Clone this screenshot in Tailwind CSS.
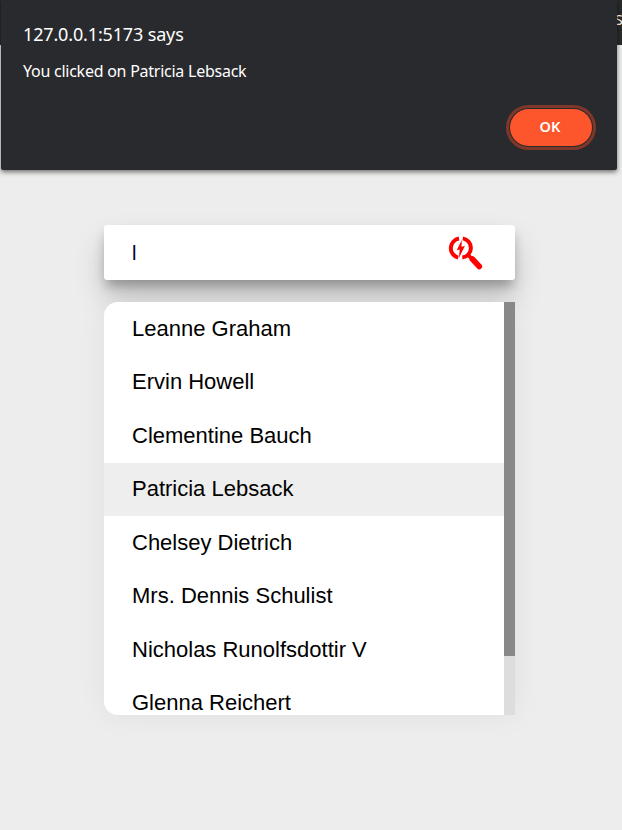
<!DOCTYPE html>
<html lang="en">
<head>
<meta charset="utf-8">
<title>User search</title>
<script src="https://cdn.jsdelivr.net/npm/@tailwindcss/browser@4"></script>
</head>
<body class="relative h-[830px] w-[622px] overflow-hidden bg-[#ededed] font-['Liberation_Sans',Arial,sans-serif] text-black">
  <header class="flex h-[45px] justify-end bg-[#292a2a] pt-[10px] font-['Noto_Sans',sans-serif] text-[14px] leading-5 text-white">
    <span class="w-[7px] overflow-hidden whitespace-nowrap">S</span>
  </header>

  <main class="ml-[104px] mt-[180px] flex w-[411px] flex-col gap-[22px]">
    <div class="flex h-[55px] items-center justify-between rounded-[3px] bg-white pl-[28px] pr-[32px] shadow-[0_17px_30px_rgba(0,0,0,0.18),0_8px_12px_-2px_rgba(0,0,0,0.28)]">
      <span class="text-[20px] leading-6 text-[#000033]">l</span>
      <svg class="-ml-px h-[34px] w-[35px]" viewBox="0 0 35 34" fill="none">
        <path d="M11 2.6A9.7 9.7 0 0 0 10.2 21.6M14.8 2.4A9.7 9.7 0 0 1 14.3 21.6" stroke="#f00" stroke-width="4"/>
        <path d="M13.8 4 8.7 14.3l3-.7-.8 8.4 6-12.1-3.4.8z" fill="#f00"/>
        <path d="m19 18 5 4.8" stroke="#f00" stroke-width="3.6"/>
        <path d="m24.3 23 7 7.5" stroke="#f00" stroke-width="5.6" stroke-linecap="round"/>
      </svg>
    </div>

    <div class="flex h-[413px] overflow-hidden rounded-l-[14px] bg-white shadow-[0_0_30px_rgba(0,0,0,0.06)]">
      <ul class="min-w-0 flex-1 text-[22px] leading-[53px]">
        <li class="h-[53px] pl-[28px]">Leanne Graham</li>
        <li class="h-[54px] pl-[28px]">Ervin Howell</li>
        <li class="h-[54px] pl-[28px]">Clementine Bauch</li>
        <li class="h-[53px] bg-[#eeeeee] pl-[28px] leading-[51px]">Patricia Lebsack</li>
        <li class="h-[53px] pl-[28px]">Chelsey Dietrich</li>
        <li class="h-[54px] pl-[28px]">Mrs. Dennis Schulist</li>
        <li class="h-[53px] pl-[28px]">Nicholas Runolfsdottir V</li>
        <li class="h-[54px] pl-[28px]">Glenna Reichert</li>
      </ul>
      <div class="w-[11px] bg-[#dddddd]">
        <div class="h-[354px] bg-[#888888]"></div>
      </div>
    </div>
  </main>

  <div role="alertdialog" class="absolute left-px top-0 flex h-[170px] w-[616px] flex-col rounded-b-[2px] bg-[#292a2e] pl-[22px] pr-[21px] pt-[22px] font-['Noto_Sans',sans-serif] text-white shadow-[0_2px_5px_rgba(0,0,0,0.55)]">
    <h1 class="text-[18px] leading-6 tracking-[-0.15px]">127.0.0.1:5173 says</h1>
    <p class="mt-[15px] text-[16px] leading-5 tracking-[-0.25px]">You clicked on Patricia Lebsack</p>
    <button class="mt-[24px] flex h-[45px] w-[90px] items-center justify-center self-end rounded-full border-[3px] border-[#7e3728] p-px">
      <span class="flex h-[37px] w-[82px] items-center justify-center rounded-full bg-[#fe562c] pb-[2px] pr-[2px] text-[14.5px] font-semibold">OK</span>
    </button>
  </div>
</body>
</html>
